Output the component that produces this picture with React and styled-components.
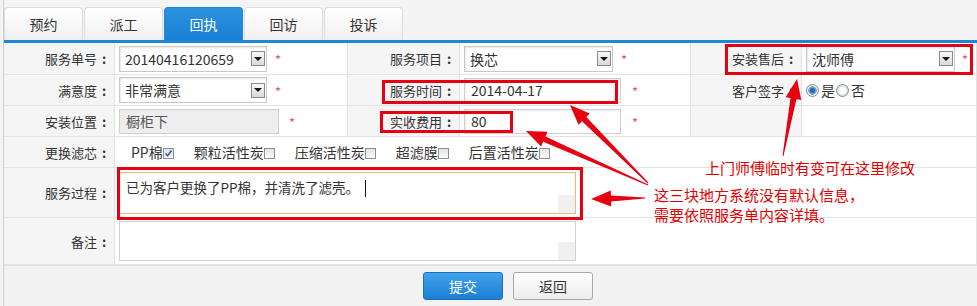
import React from 'react';
import styled, { createGlobalStyle } from 'styled-components';

const GlobalStyle = createGlobalStyle`
  body {
    margin: 0;
    background: #f3f3f3;
    font-family: "Noto Sans CJK SC", "Noto Sans", sans-serif;
    color: #333;
  }
`;

const Page = styled.div`
  position: relative;
  width: 977px;
  height: 306px;
  overflow: hidden;
  background: repeating-linear-gradient(90deg, #f1f1f1 0 1px, #f6f6f6 1px 3px);
`;

const Frame = styled.div`
  margin-left: 3px;
  border-left: 1px solid #cfcfcf;
  background: #fff;
`;

const TabBar = styled.div`
  display: flex;
  gap: 1px;
  padding-top: 7px;
  background: #f4f4f4;
  border-bottom: 3px solid #1e86d6;
`;

const Tab = styled.div`
  width: 79px;
  height: 33px;
  box-sizing: border-box;
  display: flex;
  align-items: center;
  justify-content: center;
  font-size: 14px;
  border: 1px solid ${p => (p.$active ? '#1e86d6' : '#dcdcdc')};
  border-bottom: none;
  border-radius: 4px 4px 0 0;
  color: ${p => (p.$active ? '#fff' : '#333')};
  background: ${p =>
    p.$active
      ? 'linear-gradient(#2b92e0, #1a80d2)'
      : 'linear-gradient(#ffffff, #f0f0f0)'};
`;

const Grid = styled.div`
  display: grid;
  grid-template-columns: 111px 233px 112px 231px 111px 1fr;
  grid-template-rows: 32px 31px 31px 31px 50px 47px;
`;

const Cell = styled.div`
  box-sizing: border-box;
  display: flex;
  align-items: center;
  grid-column: ${p => p.$span || 'auto'};
  border-bottom: 1px solid #e3e3e3;
  border-right: 1px solid #e3e3e3;
  background: ${p => (p.$label ? '#f5f5f5' : '#fff')};
  justify-content: ${p => (p.$label ? 'flex-end' : 'flex-start')};
  padding: ${p => (p.$label ? '0 3px 0 0' : '0 0 0 4px')};
  font-size: 13px;
  white-space: nowrap;
`;

const Colon = styled.span`
  display: inline-block;
  width: 14px;
  text-align: center;
  font-weight: bold;
`;

const Select = styled.div`
  width: ${p => p.$w}px;
  height: 26px;
  box-sizing: border-box;
  border: 1px solid #c8c8c8;
  box-shadow: inset 1px 1px 2px #e6e6e6;
  background: #fff;
  display: flex;
  align-items: center;
  justify-content: space-between;
  padding: 0 1px 0 5px;
  font-size: 14px;
  color: #333;
`;

const Arrow = styled.span`
  width: 14px;
  height: 15px;
  box-sizing: border-box;
  border: 1px solid #8a8a8a;
  background: linear-gradient(#fafafa, #d8d8d8);
  display: flex;
  align-items: center;
  justify-content: center;

  &::after {
    content: '';
    border-left: 4px solid transparent;
    border-right: 4px solid transparent;
    border-top: 4px solid #111;
  }
`;

const Input = styled.div`
  width: ${p => p.$w}px;
  height: 25px;
  box-sizing: border-box;
  border: 1px solid #cfcfcf;
  box-shadow: inset 1px 1px 2px #ececec;
  background: ${p => (p.$disabled ? '#eeeeee' : '#fff')};
  display: flex;
  align-items: center;
  padding-left: 6px;
  font-size: 14px;
  color: ${p => (p.$disabled ? '#555' : '#333')};
`;

const Star = styled.span`
  color: #e25a5a;
  font-size: 13px;
  margin-left: ${p => p.$gap || 8}px;
  align-self: flex-start;
  margin-top: 7px;
`;

const Radios = styled.div`
  display: flex;
  align-items: center;
  font-size: 14px;
  gap: 1px;
`;

const Radio = styled.span`
  width: 11px;
  height: 11px;
  border-radius: 50%;
  border: 1px solid #8d8d8d;
  background: ${p =>
    p.$on
      ? 'radial-gradient(circle, #2d6fa8 0 2.5px, #6aa8dc 3px 4px, #eee 4.5px)'
      : 'radial-gradient(circle, #fff 0 3px, #ddd 5px)'};
  margin-right: 1px;
`;

const Filters = styled.div`
  display: flex;
  gap: 20px;
  padding-left: 12px;
  font-size: 14px;
  color: #333;
`;

const Filter = styled.label`
  display: flex;
  align-items: flex-end;
`;

const Box = styled.span`
  width: 11px;
  height: 11px;
  box-sizing: border-box;
  border: 1px solid #8f8f8f;
  background: linear-gradient(#e4e4e4, #fafafa);
  margin-bottom: 3px;
  display: flex;
  align-items: center;
  justify-content: center;
`;

const TextArea = styled.div`
  position: relative;
  width: 457px;
  height: ${p => p.$h}px;
  box-sizing: border-box;
  border: 1px solid ${p => (p.$focus ? '#dcc08c' : '#d0d0d0')};
  box-shadow: ${p => (p.$focus ? 'inset 0 0 2px #ead7b2' : 'none')};
  padding: 4px 6px;
  font-size: 13.5px;
  color: #333;
  background: #fff;

  &::after {
    content: '';
    position: absolute;
    right: 0;
    bottom: 0;
    width: 17px;
    height: 18px;
    background: #f0f0f0;
  }
`;

const Caret = styled.span`
  display: inline-block;
  width: 1px;
  height: 17px;
  background: #111;
  vertical-align: middle;
  margin-left: 6px;
`;

const Footer = styled.div`
  display: flex;
  gap: 10px;
  padding: 6px 0 0 419px;
  height: 41px;
  box-sizing: border-box;
  background: #f2f2f2;
  border-top: 1px solid #e0e0e0;
`;

const Button = styled.button`
  width: 80px;
  height: 28px;
  border-radius: 3px;
  font-family: inherit;
  font-size: 14px;
  border: 1px solid ${p => (p.$primary ? '#1a6fbf' : '#a8a8a8')};
  color: ${p => (p.$primary ? '#fff' : '#333')};
  background: ${p =>
    p.$primary
      ? 'linear-gradient(#43a3ea, #1a7fd3)'
      : 'linear-gradient(#ffffff, #ececec)'};
`;

const Note = styled.div`
  position: absolute;
  left: ${p => p.$x}px;
  top: ${p => p.$y}px;
  color: #e10000;
  font-size: 15px;
  line-height: 22px;
  white-space: nowrap;
`;

const Overlay = styled.svg`
  position: absolute;
  left: 0;
  top: 0;
  pointer-events: none;
`;

const arrowPoints = (x1, y1, x2, y2) => {
  const dx = x2 - x1;
  const dy = y2 - y1;
  const len = Math.hypot(dx, dy);
  const ux = dx / len;
  const uy = dy / len;
  const nx = -uy;
  const ny = ux;
  const head = 20;
  const bx = x2 - ux * head;
  const by = y2 - uy * head;
  const pts = [
    [x1 + nx * 0.5, y1 + ny * 0.5],
    [bx + nx * 3, by + ny * 3],
    [bx + nx * 8, by + ny * 8],
    [x2, y2],
    [bx - nx * 8, by - ny * 8],
    [bx - nx * 3, by - ny * 3],
    [x1 - nx * 0.5, y1 - ny * 0.5],
  ];
  return pts.map(p => p.map(v => v.toFixed(1)).join(',')).join(' ');
};

const filters = [
  ['PP棉', true],
  ['颗粒活性炭', false],
  ['压缩活性炭', false],
  ['超滤膜', false],
  ['后置活性炭', false],
];

const Label = ({ children }) => (
  <Cell $label>
    {children}
    {children && <Colon>:</Colon>}
  </Cell>
);

const App = () => {
  return (
    <Page>
      <GlobalStyle />
      <Frame>
        <TabBar>
          <Tab>预约</Tab>
          <Tab>派工</Tab>
          <Tab $active>回执</Tab>
          <Tab>回访</Tab>
          <Tab>投诉</Tab>
        </TabBar>
        <Grid>
          <Label>服务单号</Label>
          <Cell>
            <Select $w={148}>20140416120659<Arrow /></Select>
            <Star>*</Star>
          </Cell>
          <Label>服务项目</Label>
          <Cell>
            <Select $w={149}>换芯<Arrow /></Select>
            <Star>*</Star>
          </Cell>
          <Label>安装售后</Label>
          <Cell>
            <Select $w={149}>沈师傅<Arrow /></Select>
            <Star $gap={7}>*</Star>
          </Cell>

          <Label>满意度</Label>
          <Cell>
            <Select $w={148}>非常满意<Arrow /></Select>
            <Star>*</Star>
          </Cell>
          <Label>服务时间</Label>
          <Cell>
            <Input $w={157}>2014-04-17</Input>
            <Star $gap={11}>*</Star>
          </Cell>
          <Label>客户签字</Label>
          <Cell>
            <Radios>
              <Radio $on />是 <Radio />否
            </Radios>
          </Cell>

          <Label>安装位置</Label>
          <Cell>
            <Input $w={160} $disabled>橱柜下</Input>
            <Star $gap={10}>*</Star>
          </Cell>
          <Label>实收费用</Label>
          <Cell>
            <Input $w={157}>80</Input>
            <Star $gap={11}>*</Star>
          </Cell>
          <Label />
          <Cell />

          <Label>更换滤芯</Label>
          <Cell $span="span 5">
            <Filters>
              {filters.map(([name, on]) => (
                <Filter key={name}>
                  {name}
                  <Box>
                    {on && (
                      <svg width="9" height="9" viewBox="0 0 9 9">
                        <path d="M1.5 4.5 L3.6 6.8 L7.6 1.5" fill="none" stroke="#2a5fa8" strokeWidth="1.6" />
                      </svg>
                    )}
                  </Box>
                </Filter>
              ))}
            </Filters>
          </Cell>

          <Label>服务过程</Label>
          <Cell $span="span 5">
            <TextArea $h={42} $focus>
              已为客户更换了PP棉，并清洗了滤壳。<Caret />
            </TextArea>
          </Cell>

          <Label>备注</Label>
          <Cell $span="span 5">
            <TextArea $h={40} />
          </Cell>
        </Grid>
        <Footer>
          <Button $primary>提交</Button>
          <Button>返回</Button>
        </Footer>
      </Frame>

      <Overlay width="977" height="306">
        <g fill="none" stroke="#e60012" strokeWidth="3">
          <rect x="726.5" y="45.5" width="245" height="28" />
          <rect x="383.5" y="81.5" width="233" height="21" />
          <rect x="381.5" y="112.5" width="130" height="19" />
          <rect x="118.5" y="168.5" width="463" height="50" />
        </g>
        <g fill="#e60012">
          <polygon points={arrowPoints(783, 156, 797, 79)} />
          <polygon points={arrowPoints(648, 183, 570, 105)} />
          <polygon points={arrowPoints(648, 185, 526, 131)} />
          <polygon points={arrowPoints(645, 198, 591, 199)} />
        </g>
      </Overlay>
      <Note $x={705} $y={157}>上门师傅临时有变可在这里修改</Note>
      <Note $x={654} $y={184}>这三块地方系统没有默认信息，</Note>
      <Note $x={654} $y={204}>需要依照服务单内容详填。</Note>
    </Page>
  );
};

export default App;
